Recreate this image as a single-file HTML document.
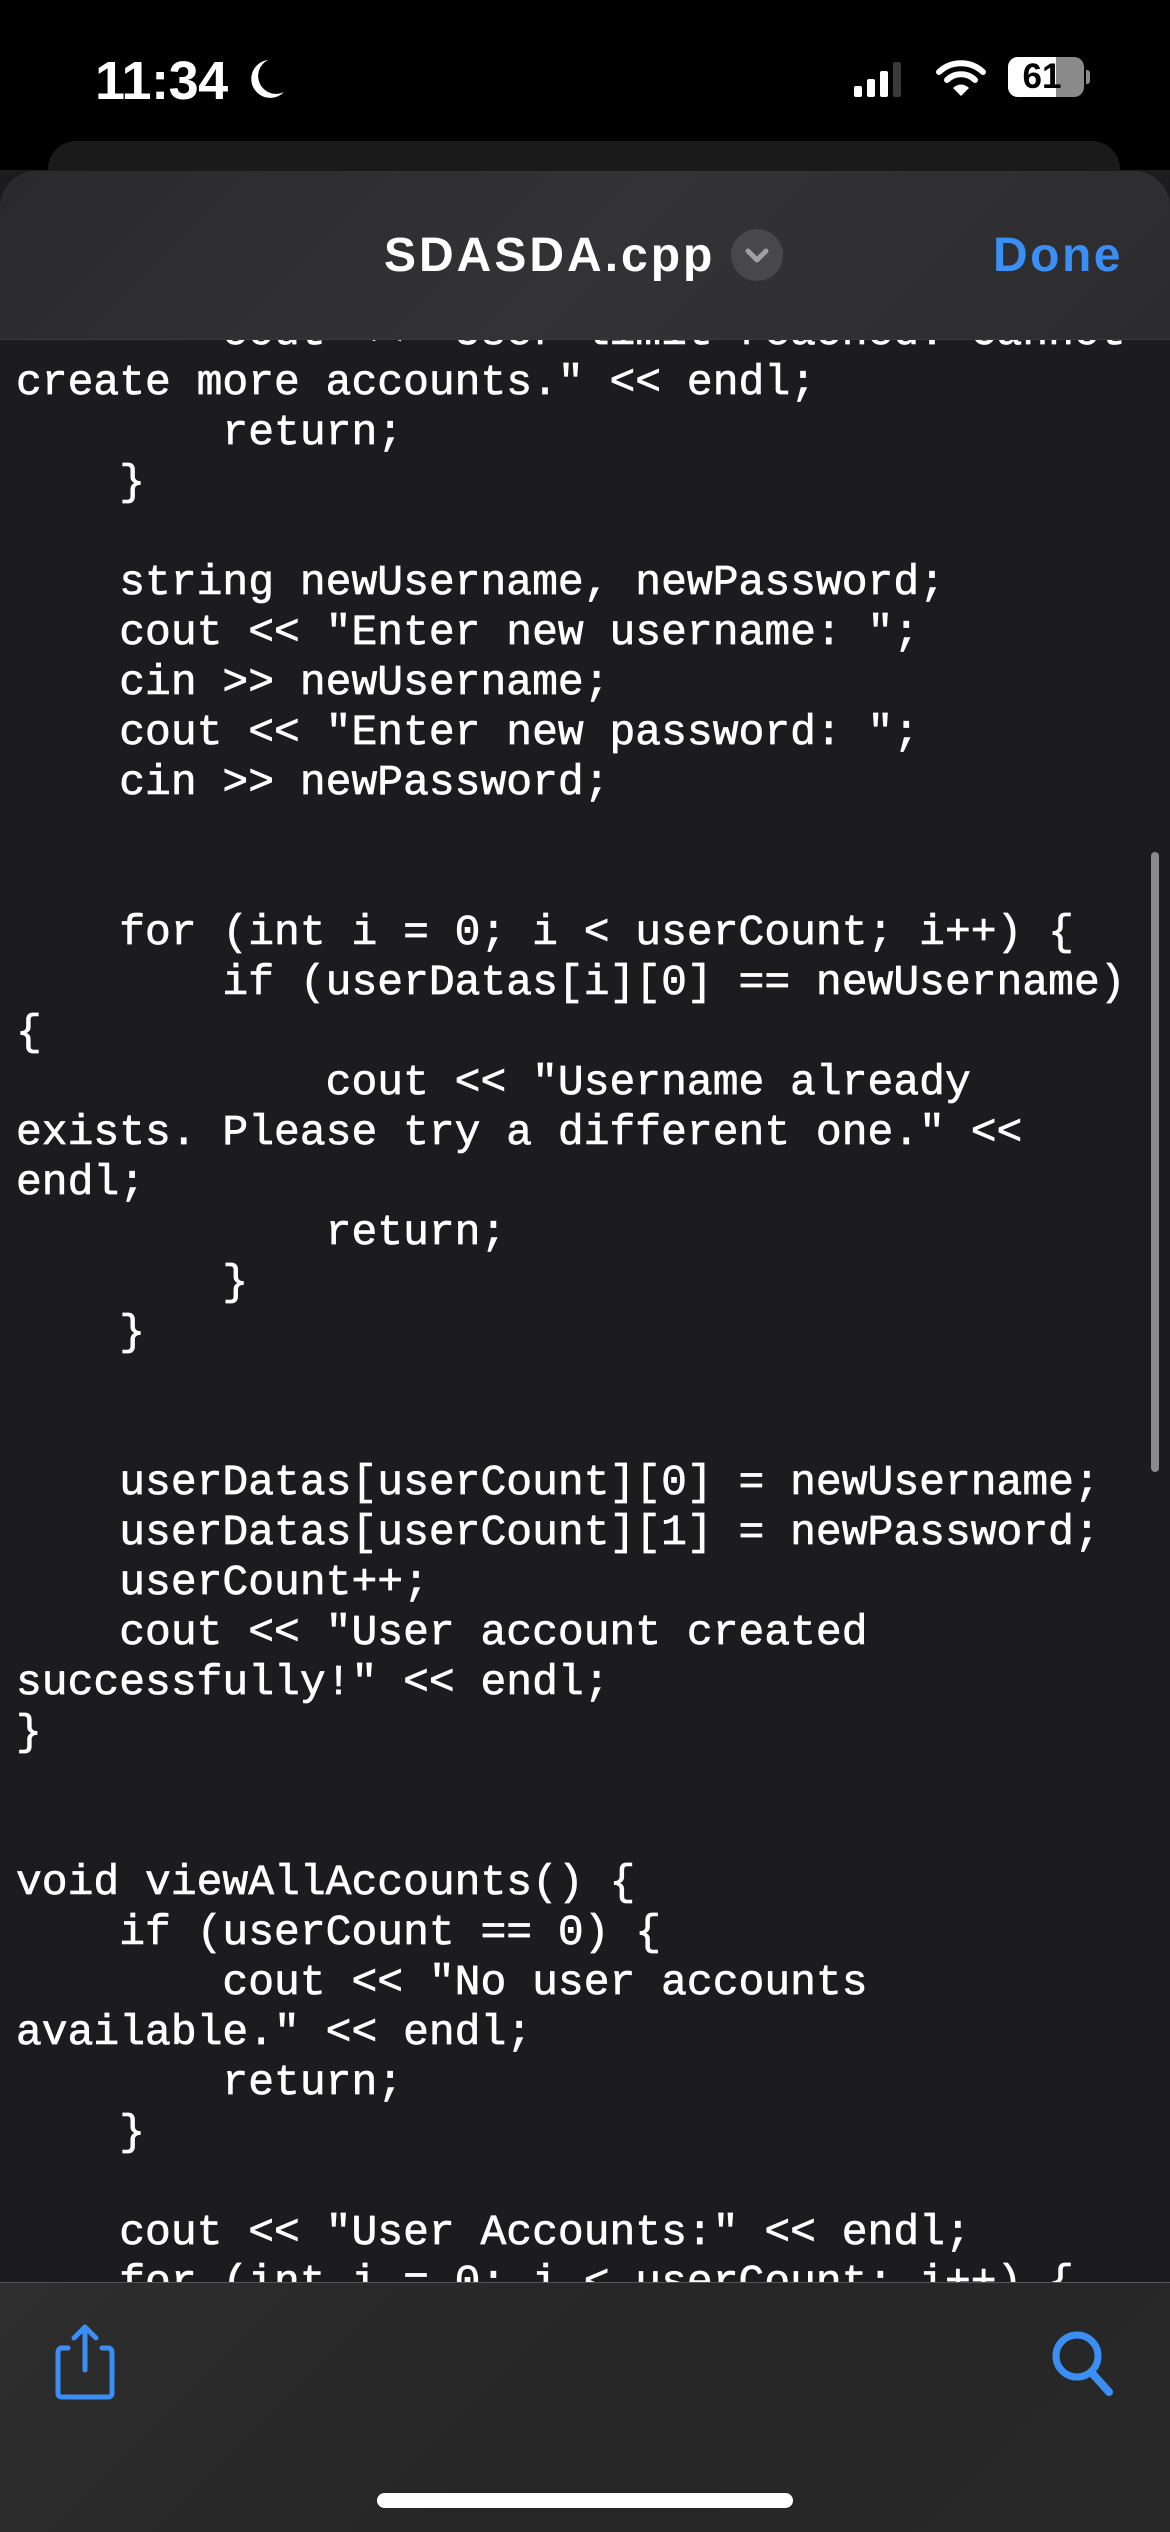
<!DOCTYPE html>
<html><head><meta charset="utf-8"><style>
*{margin:0;padding:0;box-sizing:border-box}
body{width:1170px;height:2532px;background:#000;position:relative;overflow:hidden;font-family:"Liberation Sans",sans-serif}
.code{position:absolute;left:0;top:170px;width:1170px;height:2120px;background:#1c1c1e}
pre{position:absolute;left:16px;top:308px;font-family:"Liberation Mono",monospace;font-size:43px;line-height:50px;color:#fff;white-space:pre;-webkit-text-stroke:0.7px #fff}
.back{position:absolute;left:48px;top:141px;width:1072px;height:60px;background:#1a1a1b;border-radius:28px 28px 0 0}
.hdr{position:absolute;left:0;top:171px;width:1170px;height:169px;background:linear-gradient(135deg,#2a2a2c,#333335 50%,#2c2c2e);border-radius:36px 36px 0 0;border-bottom:1px solid #3a3a3c}
.title{position:absolute;left:384px;top:228px;font-size:48px;font-weight:bold;color:#fff;letter-spacing:3px}
.chev{position:absolute;left:731px;top:229px;width:52px;height:52px;border-radius:50%;background:#48484a}
.done{position:absolute;left:993px;top:228px;font-size:48px;font-weight:bold;color:#3b8ef3;letter-spacing:2.5px}
.tb{position:absolute;left:0;top:2282px;width:1170px;height:250px;background:linear-gradient(135deg,#2e2e2e,#262626 50%,#282828);border-top:1px solid #555}
.home{position:absolute;left:377px;top:2493px;width:416px;height:15px;border-radius:8px;background:#fff}
.scroll{position:absolute;left:1151px;top:852px;width:8px;height:620px;border-radius:4px;background:#8a8a8e}
.time{position:absolute;left:95px;top:50px;font-size:54px;font-weight:bold;color:#fff;letter-spacing:-0.5px}
</style></head><body>
<div class="code"></div>
<pre>        cout &lt;&lt; "User limit reached. Cannot
create more accounts." &lt;&lt; endl;
        return;
    }

    string newUsername, newPassword;
    cout &lt;&lt; "Enter new username: ";
    cin &gt;&gt; newUsername;
    cout &lt;&lt; "Enter new password: ";
    cin &gt;&gt; newPassword;


    for (int i = 0; i &lt; userCount; i++) {
        if (userDatas[i][0] == newUsername)
{
            cout &lt;&lt; "Username already
exists. Please try a different one." &lt;&lt;
endl;
            return;
        }
    }


    userDatas[userCount][0] = newUsername;
    userDatas[userCount][1] = newPassword;
    userCount++;
    cout &lt;&lt; "User account created
successfully!" &lt;&lt; endl;
}


void viewAllAccounts() {
    if (userCount == 0) {
        cout &lt;&lt; "No user accounts
available." &lt;&lt; endl;
        return;
    }

    cout &lt;&lt; "User Accounts:" &lt;&lt; endl;
    for (int i = 0; i &lt; userCount; i++) {</pre>
<div class="scroll"></div>
<div class="back"></div>
<div class="hdr"></div>
<div class="title">SDASDA.cpp</div>
<div class="chev"><svg width="52" height="52" viewBox="0 0 52 52"><path d="M17 22 L26 31 L35 22" stroke="#a0a0a5" stroke-width="5" fill="none" stroke-linecap="round" stroke-linejoin="round"/></svg></div>
<div class="done">Done</div>
<div class="time">11:34</div>
<svg style="position:absolute;left:246px;top:58px" width="40" height="42" viewBox="0 0 40 42"><path d="M22 2 A19 19 0 1 0 38 34 A17 17 0 0 1 22 2Z" fill="#fff"/></svg>
<svg style="position:absolute;left:852px;top:60px" width="56" height="38" viewBox="0 0 56 38"><rect x="2" y="26" width="8" height="11" rx="2" fill="#fff"/><rect x="15" y="19" width="8" height="18" rx="2" fill="#fff"/><rect x="28" y="11" width="8" height="26" rx="2" fill="#fff"/><rect x="41" y="2" width="8" height="35" rx="2" fill="#3a3a3a"/></svg>
<svg style="position:absolute;left:935px;top:58px" width="52" height="40" viewBox="0 0 52 40"><path d="M4 14 A32 32 0 0 1 48 14" stroke="#fff" stroke-width="6" fill="none" stroke-linecap="round"/><path d="M12 22 A20 20 0 0 1 40 22" stroke="#fff" stroke-width="6" fill="none" stroke-linecap="round"/><path d="M18 30 L26 38 L34 30 A11 11 0 0 0 18 30Z" fill="#fff"/></svg>
<div style="position:absolute;left:1008px;top:57px;width:76px;height:40px;border-radius:10px;background:#8a8a8a;overflow:hidden"><div style="width:48px;height:40px;background:#fff"></div><div style="position:absolute;left:4px;top:0;width:60px;text-align:center;font-size:35px;font-weight:bold;line-height:40px;color:#000">61</div></div>
<div style="position:absolute;left:1086px;top:70px;width:4px;height:14px;border-radius:0 3px 3px 0;background:#8a8a8a"></div>
<div class="tb"></div>
<svg style="position:absolute;left:54px;top:2323px" width="62" height="78" viewBox="0 0 62 78"><path d="M14 25 H8 Q4 25 4 30 V70 Q4 74 8 74 H54 Q58 74 58 70 V30 Q58 25 54 25 H48" stroke="#3b8ef3" stroke-width="5" fill="none" stroke-linecap="round"/><path d="M31 47 V4 M20 15 L31 4 L42 15" stroke="#3b8ef3" stroke-width="5" fill="none" stroke-linecap="round" stroke-linejoin="round"/></svg>
<svg style="position:absolute;left:1050px;top:2330px" width="68" height="68" viewBox="0 0 68 68"><circle cx="27" cy="26" r="21" stroke="#3b8ef3" stroke-width="7" fill="none"/><path d="M41 42 L59 62" stroke="#3b8ef3" stroke-width="8" stroke-linecap="round"/></svg>
<div class="home"></div>
</body></html>
